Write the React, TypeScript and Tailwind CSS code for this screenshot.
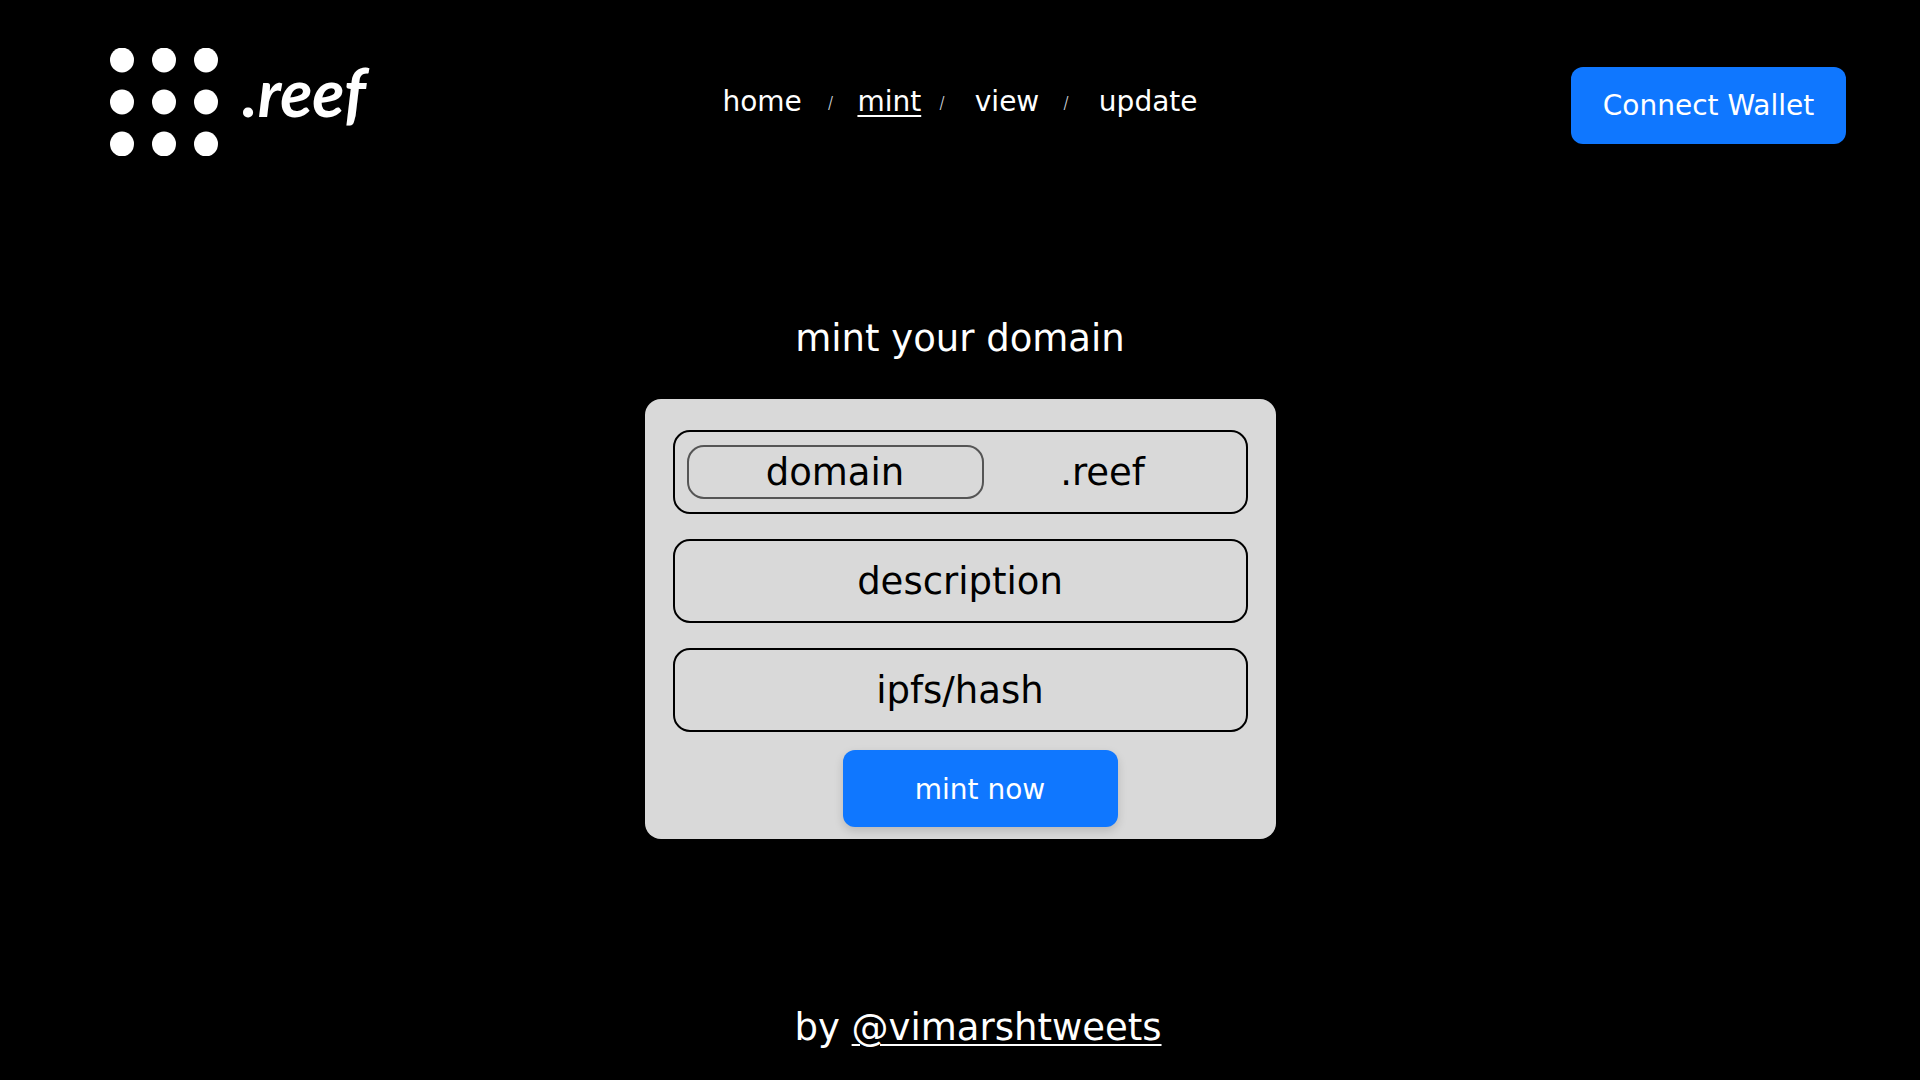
import React from "react";

const dots = [12, 54, 96];

function Logo() {
  return (
    <a href="#home" aria-label=".reef home" className="flex items-center gap-6">
      <svg viewBox="0 0 108 108" className="size-[108px] shrink-0 fill-white" aria-hidden="true">
        {dots.map((cy) => dots.map((cx) => <ellipse key={`${cx}-${cy}`} cx={cx} cy={cy} rx="12" ry="12.4" />))}
      </svg>
      <span className="pb-5 font-[Lato,sans-serif] text-[66px] leading-none font-bold italic">.reef</span>
    </a>
  );
}

function Slash() {
  return <span className="font-[Inter,sans-serif] text-base font-light text-gray-300" aria-hidden="true">/</span>;
}

const fieldClass =
  "h-[84px] w-full rounded-[17px] border-2 border-black bg-transparent text-center text-[37px] text-black outline-none placeholder:text-black placeholder:opacity-100";

export default function App() {
  return (
    <div className="flex min-h-screen flex-col bg-black font-['DejaVu_Sans',sans-serif] text-white">
      <header className="grid grid-cols-[1fr_auto_1fr] items-center pt-12">
        <div className="flex pl-[110px]">
          <Logo />
        </div>
        <nav className="flex items-center text-[28px] leading-8" aria-label="Main">
          <a href="#home">home</a>
          <span className="flex pr-6 pl-[26px]"><Slash /></span>
          <a href="#mint" aria-current="page" className="underline decoration-2 underline-offset-4">mint</a>
          <span className="flex pr-[30px] pl-[18px]"><Slash /></span>
          <a href="#view">view</a>
          <span className="flex pr-[30px] pl-6"><Slash /></span>
          <a href="#update">update</a>
        </nav>
        <div className="flex justify-end pt-[6px] pr-[74px]">
          <button type="button" className="h-[77px] w-[275px] rounded-xl bg-[#0f77ff] pt-0.5 text-[28px] whitespace-nowrap">
            Connect Wallet
          </button>
        </div>
      </header>

      <main className="flex flex-col items-center px-4 pt-[163px]">
        <h1 className="text-[37px] leading-10">mint your domain</h1>
        <form
          className="mt-10 flex w-full max-w-[631px] flex-col rounded-2xl bg-[#d9d9d9] px-7 pt-[31px] pb-3"
          onSubmit={(e: React.FormEvent) => e.preventDefault()}
        >
          <div className="flex flex-col gap-[25px]">
            <div className="flex h-[84px] items-center rounded-[17px] border-2 border-black pr-6 pl-3 text-[37px] text-black">
              <input
                aria-label="domain"
                placeholder="domain"
                className="h-[54px] w-[297px] min-w-0 rounded-[17px] border-2 border-[#555] bg-transparent pt-0.5 text-center outline-none placeholder:text-black placeholder:opacity-100"
              />
              <span className="flex-1 pt-0.5 text-center">.reef</span>
            </div>
            <input aria-label="description" placeholder="description" className={fieldClass} />
            <input aria-label="ipfs/hash" placeholder="ipfs/hash" className={fieldClass} />
          </div>
          <div className="flex justify-center pt-[18px] pl-10">
            <button type="submit" className="h-[77px] w-[275px] rounded-xl bg-[#0f77ff] pt-0.5 text-[28px] shadow-[0_4px_10px_rgba(0,0,0,0.15)]">
              mint now
            </button>
          </div>
        </form>
      </main>

      <footer className="mt-auto pb-8 pl-9 text-center text-[37px] leading-10">
        by{" "}
        <a href="#vimarshtweets" className="underline decoration-2 underline-offset-4">@vimarshtweets</a>
      </footer>
    </div>
  );
}
